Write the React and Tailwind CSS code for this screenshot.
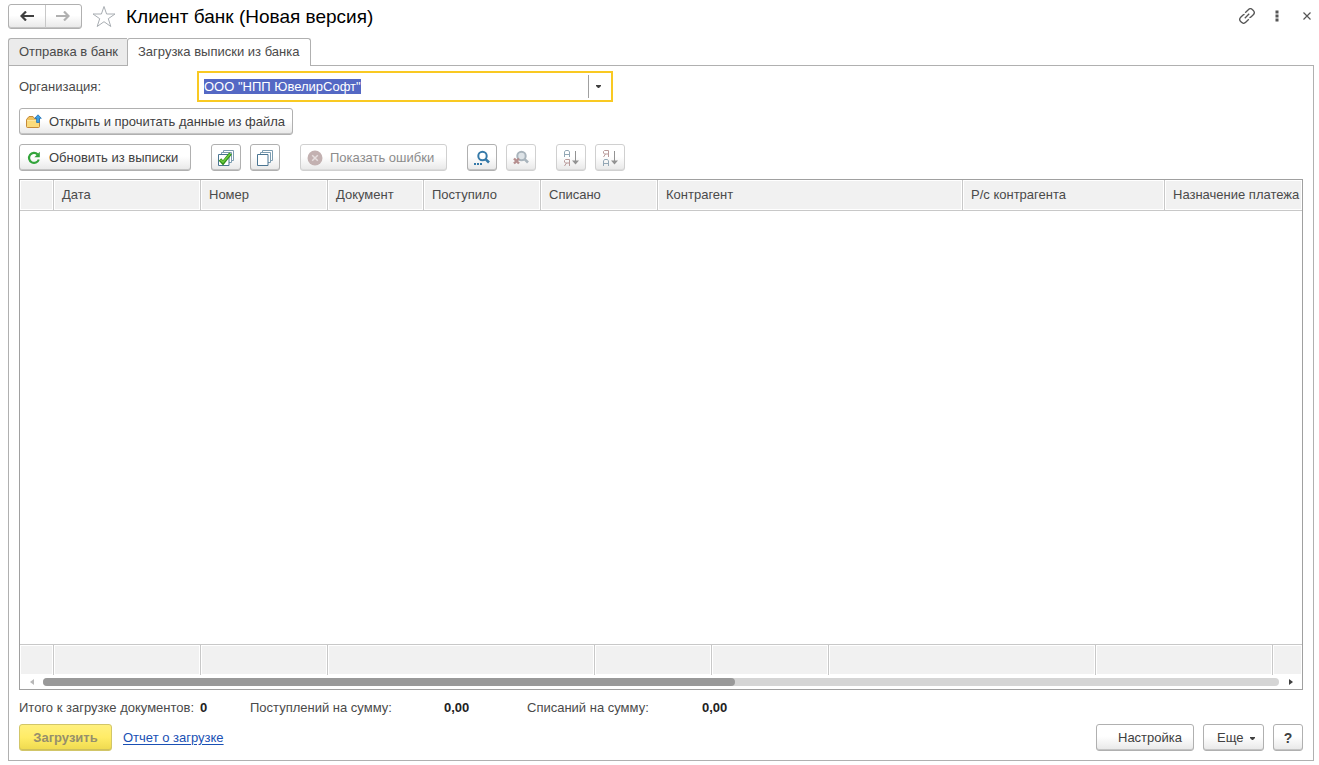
import { useEffect, useRef } from "react";

const columns = [
  { title: "", width: "w-[34px]" },
  { title: "Дата", width: "w-[147px]" },
  { title: "Номер", width: "w-[127px]" },
  { title: "Документ", width: "w-[96px]" },
  { title: "Поступило", width: "w-[117px]" },
  { title: "Списано", width: "w-[117px]" },
  { title: "Контрагент", width: "w-[305px]" },
  { title: "Р/с контрагента", width: "w-[202px]" },
  { title: "Назначение платежа", width: "w-auto" },
];

const footerColumns = [
  "w-[34px]",
  "w-[147px]",
  "w-[127px]",
  "w-[267px]",
  "w-[117px]",
  "w-[117px]",
  "w-[267px]",
  "w-[177px]",
  "w-auto",
];

function Button({ children, className = "", disabled, ...props }) {
  return (
    <button
      type="button"
      disabled={disabled}
      className={`flex h-[27px] shrink-0 items-center rounded-[3px] border bg-linear-to-b from-white from-45% to-[#e8e8e8] pt-px whitespace-nowrap ${
        disabled
          ? "border-[#d0d0d0] text-[#8c8c8c] shadow-[inset_0_-1px_0_#dcdcdc]"
          : "border-[#b0b0b0] text-[#404040] shadow-[inset_0_-1px_0_#c4c4c4]"
      } ${className}`}
      {...props}>
      {children}
    </button>
  );
}

function IconButton({ label, disabled, children }) {
  return (
    <Button aria-label={label} disabled={disabled} className="w-[30px] justify-center">
      {children}
    </Button>
  );
}

function ArrowIcon({ className }) {
  return (
    <svg width="14" height="10" viewBox="0 0 14 10" className={className}>
      <path d="M6 .5 1.500 5 6 9.500M1.500 5H14" fill="none" stroke="currentColor" strokeWidth="2.200" />
    </svg>
  );
}

function StarIcon() {
  return (
    <svg width="24" height="23" viewBox="0 0 24 23">
      <path
        d="M12 1.500 14.600 9H23l-6.700 4.700 2.500 7.800L12 16.700 5.200 21.500l2.500-7.800L1 9h8.400z"
        fill="#fff"
        stroke="#a8adb2"
      />
    </svg>
  );
}

function LinkIcon() {
  return (
    <svg width="16" height="16" viewBox="0 0 16 16" fill="none" stroke="#555" strokeWidth="1.300">
      <path d="M6.200 4.800 9.300 1.700a3 3 0 0 1 4.200 0l.8.8a3 3 0 0 1 0 4.200L12.200 8.800a2.800 2.800 0 0 1-1.800.8" />
      <path d="M9.800 11.200 6.700 14.300a3 3 0 0 1-4.200 0l-.8-.8a3 3 0 0 1 0-4.200L3.800 7.200a2.800 2.800 0 0 1 1.800-.8" />
      <path d="M5.800 10.200l4.400-4.400" />
    </svg>
  );
}

function FolderIcon() {
  return (
    <svg width="16" height="16" viewBox="0 0 16 16">
      <path d="M.5 12.500V5.500L3 2.500h4L8.500 4.500H13.500V12.500q0 1-1 1h-11q-1 0-1-1z" fill="#f0c25c" stroke="#c48a3a" />
      <path d="M1 7h12v6H1z" fill="#fadb7c" />
      <path d="M1 6.500h12" stroke="#fbe6a4" />
      <path d="M12 .8 15.300 4.300H13.400V8.500H10.600V4.300H8.700z" fill="#3fa0e4" stroke="#1f70b4" strokeWidth=".8" />
    </svg>
  );
}

function RefreshIcon() {
  return (
    <svg width="14" height="14" viewBox="0 0 14 14">
      <path d="M10.600 3.400A5 5 0 1 0 11.800 8.500" fill="none" stroke="#32a43a" strokeWidth="2.200" />
      <path d="M12.800.8V6.200H7.400z" fill="#32a43a" />
    </svg>
  );
}

function PagesIcon({ checked }) {
  return (
    <svg width="16" height="16" viewBox="0 0 16 16" fill="#fff" stroke="#7c9cb0">
      <path d="M5.500.5h10v10h-10z" />
      <path d="M3.500 2.500h10v10h-10z" />
      <path d="M.5 4.500h10.500v11H.5z" stroke="#4a7592" />
      {checked && (
        <path d="M2 9.500 5 12.800 12.500 3.500" fill="none" stroke="#2f8f1c" strokeWidth="3.400" />
      )}
      {checked && (
        <path d="M2.500 9.800 5 12.200 12 4" fill="none" stroke="#6ccb3c" strokeWidth="1.600" />
      )}
    </svg>
  );
}

function ErrorIcon() {
  return (
    <svg width="16" height="16" viewBox="0 0 16 16">
      <circle cx="8" cy="8" r="7.500" fill="#c3b1b1" />
      <path d="M5.200 5.200l5.600 5.600M10.800 5.200l-5.600 5.600" stroke="#e6dede" strokeWidth="1.500" />
    </svg>
  );
}

function SearchIcon() {
  return (
    <svg width="16" height="16" viewBox="0 0 16 16" fill="none" stroke="#3579a8">
      <circle cx="8.500" cy="6" r="4.200" strokeWidth="2" />
      <path d="M11.300 8.800 15 12.500" strokeWidth="2.600" />
      <path d="M0 14h2M3 14h2M6 14h2" strokeWidth="2" />
    </svg>
  );
}

function ClearSearchIcon() {
  return (
    <svg width="16" height="16" viewBox="0 0 16 16" fill="none">
      <circle cx="8.500" cy="6" r="4.200" stroke="#a9b4bc" strokeWidth="2" fill="#dde3e7" />
      <path d="M11.300 8.800 15 12.500" stroke="#a9b4bc" strokeWidth="2.600" />
      <path d="M1 8.500l5 5M6 8.500l-5 5" stroke="#b58f8f" strokeWidth="2.400" />
    </svg>
  );
}

function SortIcon({ desc }) {
  const letterA = "M1.500 7V2L2.500 .500H5.500L6.500 2V7M1.500 4.500H6.500";
  const letterYa = "M6.500 7V.500H2.500L1.500 1.500V3L2.500 4H6.500M3.500 4 1.500 7";

  return (
    <svg width="16" height="16" viewBox="0 0 16 16" fill="none">
      <path d={desc ? letterYa : letterA} stroke={desc ? "#b99a9a" : "#93a7b5"} />
      <path
        d={desc ? letterA : letterYa}
        transform="translate(0 9)"
        stroke={desc ? "#93a7b5" : "#b99a9a"}
      />
      <path d="M12.500 1v11" stroke="#929292" />
      <path d="M9 10.500h7l-3.500 4z" fill="#929292" />
    </svg>
  );
}

function CaretIcon() {
  return (
    <svg width="5" height="3" viewBox="0 0 5 3">
      <path d="M0 0h5v1L3 3H2L0 1z" fill="#404040" />
    </svg>
  );
}

function TitleBar() {
  return (
    <header className="flex h-8 shrink-0 items-center pr-[3px] pl-2">
      <div className="flex h-[25px] w-[74px] rounded-[3px] border border-[#b0b0b0] bg-linear-to-b from-white from-45% to-[#e8e8e8] shadow-[inset_0_-1px_0_#c4c4c4]">
        <button type="button" aria-label="Назад" className="flex flex-1 items-center justify-center border-r border-[#c8c8c8] text-[#404040]">
          <ArrowIcon />
        </button>
        <button type="button" aria-label="Вперед" disabled className="flex flex-1 items-center justify-center text-[#b0b0b0]">
          <ArrowIcon className="rotate-180" />
        </button>
      </div>
      <button type="button" aria-label="Добавить в избранное" className="ml-[10px]">
        <StarIcon />
      </button>
      <h1 className="ml-[10px] pt-px text-[19px] whitespace-nowrap text-black">
        Клиент банк (Новая версия)
      </h1>
      <div className="ml-auto flex items-center">
        <button type="button" aria-label="Получить ссылку">
          <LinkIcon />
        </button>
        <button type="button" aria-label="Меню" className="ml-5">
          <svg width="4" height="12" viewBox="0 0 4 12" fill="#555">
            <path d="M.5.500h3v3h-3zM.5 4.500h3v3h-3zM.5 8.500h3v3h-3z" />
          </svg>
        </button>
        <button type="button" aria-label="Закрыть" className="ml-6">
          <svg width="8" height="8" viewBox="0 0 8 8" stroke="#555" strokeWidth="1.200">
            <path d="M.5.500l7 7M7.500.500l-7 7" />
          </svg>
        </button>
      </div>
    </header>
  );
}

function Tabs() {
  return (
    <div role="tablist" className="relative z-10 mt-[6px] -mb-px flex h-7 shrink-0 pl-2">
      <button
        type="button"
        role="tab"
        aria-selected="false"
        className="w-[119px] rounded-tl-[3px] border border-r-0 border-[#b0b0b0] bg-[#ebebeb] pl-[10px] text-left whitespace-nowrap">
        Отправка в банк
      </button>
      <button
        type="button"
        role="tab"
        aria-selected="true"
        className="w-[184px] rounded-t-[3px] border border-b-0 border-[#b0b0b0] bg-white pb-px pl-[10px] text-left whitespace-nowrap">
        Загрузка выписки из банка
      </button>
    </div>
  );
}

function OrganizationField() {
  const inputRef = useRef(null);

  useEffect(() => {
    inputRef.current.focus();
    inputRef.current.select();
  }, []);

  return (
    <div className="flex items-center">
      <label htmlFor="organization" className="w-[178px]">
        Организация:
      </label>
      <div className="flex h-[31px] w-[416px] items-center border-2 border-[#f9c922] bg-white">
        <input
          id="organization"
          ref={inputRef}
          type="text"
          defaultValue={'ООО "НПП ЮвелирСофт"'}
          className="h-full min-w-0 flex-1 px-[5px] text-black outline-none selection:bg-[#5468c4] selection:text-white"
        />
        <button
          type="button"
          aria-label="Выбрать"
          className="flex h-[23px] w-[23px] items-center border-l border-[#a0a0a0] pl-[7px]">
          <CaretIcon />
        </button>
      </div>
    </div>
  );
}

function Toolbar() {
  return (
    <div className="mt-[9px] flex items-center gap-5">
      <Button className="w-[172px] gap-2 pl-[7px]">
        <RefreshIcon />
        Обновить из выписки
      </Button>
      <div className="flex gap-[9px]">
        <IconButton label="Отметить все">
          <PagesIcon checked />
        </IconButton>
        <IconButton label="Снять отметки">
          <PagesIcon />
        </IconButton>
      </div>
      <Button disabled className="w-[147px] gap-[7px] pl-[6px]">
        <ErrorIcon />
        Показать ошибки
      </Button>
      <div className="flex gap-[9px]">
        <IconButton label="Найти">
          <SearchIcon />
        </IconButton>
        <IconButton label="Отменить поиск" disabled>
          <ClearSearchIcon />
        </IconButton>
      </div>
      <div className="flex gap-[9px]">
        <IconButton label="Сортировать по возрастанию" disabled>
          <SortIcon />
        </IconButton>
        <IconButton label="Сортировать по убыванию" disabled>
          <SortIcon desc />
        </IconButton>
      </div>
    </div>
  );
}

function StatementTable() {
  return (
    <div className="mt-2 flex min-h-0 flex-1 flex-col border border-[#a0a0a0] bg-white">
      <table className="w-full table-fixed border-separate border-spacing-0">
        <thead>
          <tr className="h-[31px]">
            {columns.map((column) => (
              <th
                key={column.title}
                className={`${column.width} overflow-hidden border-r border-b border-[#c8c8c8] bg-[#f1f1f1] pl-2 text-left font-normal whitespace-nowrap inset-ring inset-ring-white last:border-r-0`}>
                {column.title}
              </th>
            ))}
          </tr>
        </thead>
      </table>
      <div className="flex-1" />
      <table className="w-full table-fixed border-separate border-spacing-0 border-t border-[#c8c8c8]">
        <tbody>
          <tr className="h-[30px]">
            {footerColumns.map((width, index) => (
              <td
                key={index}
                className={`${width} border-r border-[#c8c8c8] bg-[#f1f1f1] p-0 inset-ring inset-ring-white last:border-r-0`}
              />
            ))}
          </tr>
        </tbody>
      </table>
      <div className="flex h-[14px] shrink-0 items-center">
        <button type="button" aria-label="Прокрутить влево" disabled className="flex w-[23px] justify-center">
          <svg width="4" height="6" viewBox="0 0 4 6">
            <path d="M4 0v6L0 3z" fill="#b8b8b8" />
          </svg>
        </button>
        <div className="h-2 flex-1 rounded-full bg-[#d5d5d5]">
          <div className="h-2 w-[56%] rounded-full bg-[#999]" />
        </div>
        <button type="button" aria-label="Прокрутить вправо" className="flex w-[23px] justify-center">
          <svg width="4" height="6" viewBox="0 0 4 6">
            <path d="M0 0v6l4-3z" fill="#404040" />
          </svg>
        </button>
      </div>
    </div>
  );
}

function Totals() {
  return (
    <div className="flex h-[34px] shrink-0 items-center pt-px whitespace-nowrap">
      <span className="w-[181px]">Итого к загрузке документов:</span>
      <b className="w-[50px] text-[#222]">0</b>
      <span className="w-[194px]">Поступлений на сумму:</span>
      <b className="w-[83px] text-[#222]">0,00</b>
      <span className="w-[175px]">Списаний на сумму:</span>
      <b className="text-[#222]">0,00</b>
    </div>
  );
}

function Footer() {
  return (
    <footer className="flex shrink-0 items-center gap-[9px]">
      <button
        type="button"
        disabled
        className="h-[27px] w-[93px] rounded-[3px] border border-[#d2c668] bg-linear-to-b from-[#fff07e] via-[#ffec66] to-[#eed94e] pt-px font-bold text-[#968f6c] shadow-[inset_0_-1px_0_#cfc05a]">
        Загрузить
      </button>
      <a href="#report" className="ml-[2px] text-[#1a50b4] underline underline-offset-2">
        Отчет о загрузке
      </a>
      <Button className="ml-auto w-[98px] pl-[21px]">Настройка</Button>
      <Button className="w-[61px] gap-[7px] pl-[13px]">
        Еще
        <CaretIcon />
      </Button>
      <Button aria-label="Справка" className="w-[30px] justify-center text-[14px] font-bold">
        ?
      </Button>
    </footer>
  );
}

function App() {
  return (
    <div className="flex h-screen min-h-[400px] flex-col overflow-hidden bg-white pr-[5px] pb-1 font-['Liberation_Sans',Arial,sans-serif] text-[13px] leading-4 text-[#4a4a4a]">
      <TitleBar />
      <Tabs />
      <main className="ml-2 flex min-h-0 flex-1 flex-col border border-[#b0b0b0] px-[10px] pt-[5px] pb-[9px]">
        <OrganizationField />
        <Button className="mt-[6px] w-[274px] gap-[7px] pl-[6px]">
          <FolderIcon />
          Открыть и прочитать данные из файла
        </Button>
        <Toolbar />
        <StatementTable />
        <Totals />
        <Footer />
      </main>
    </div>
  );
}

export default App;
